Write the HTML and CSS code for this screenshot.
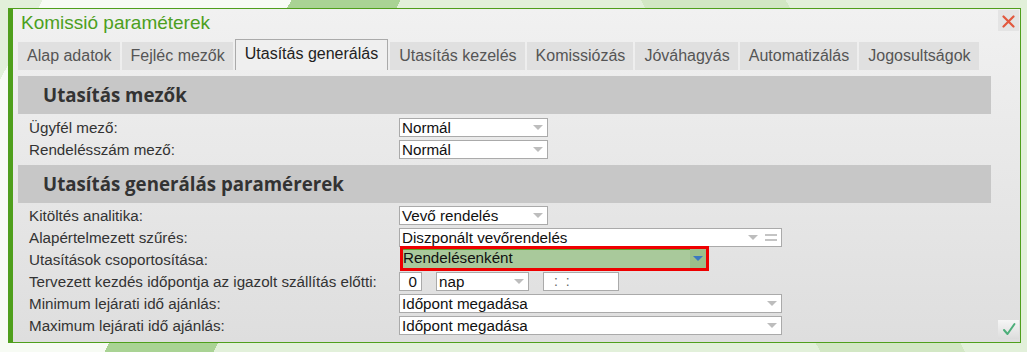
FILE: index.html
```html
<!DOCTYPE html>
<html lang="hu">
<head>
  <meta charset="UTF-8">
  <title>Komissió paraméterek</title>
  <link rel="stylesheet" href="styles.css">
</head>
<body>

  <div class="dialog">
    <div class="title">Komissió paraméterek</div>
    <button class="close-btn">
      <svg width="13" height="13" viewBox="0 0 13 13"><path d="M1.5 1.5 L11.5 11.5 M11.5 1.5 L1.5 11.5" stroke="#e2583e" stroke-width="2.2" stroke-linecap="round"/></svg>
    </button>

    <div class="tabs">
      <div class="tab">Alap adatok</div>
      <div class="tab">Fejléc mezők</div>
      <div class="tab active">Utasítás generálás</div>
      <div class="tab">Utasítás kezelés</div>
      <div class="tab">Komissiózás</div>
      <div class="tab">Jóváhagyás</div>
      <div class="tab">Automatizálás</div>
      <div class="tab">Jogosultságok</div>
    </div>

    <div class="panel">
      <div class="section-head">Utasítás mezők</div>
      <div class="rows">
        <div class="row">
          <div class="label">Ügyfél mező:</div>
          <div class="select short">Normál<span class="arrow"></span></div>
        </div>
        <div class="row">
          <div class="label">Rendelésszám mező:</div>
          <div class="select short">Normál<span class="arrow"></span></div>
        </div>
      </div>

      <div class="section-head">Utasítás generálás paramérerek</div>
      <div class="rows second">
        <div class="row">
          <div class="label">Kitöltés analitika:</div>
          <div class="select short">Vevő rendelés<span class="arrow"></span></div>
        </div>
        <div class="row">
          <div class="label">Alapértelmezett szűrés:</div>
          <div class="select wide with-eq">Diszponált vevőrendelés<span class="arrow"></span><span class="eq"></span></div>
        </div>
        <div class="row">
          <div class="label">Utasítások csoportosítása:</div>
          <div class="select highlight">Rendelésenként<span class="arrow"></span></div>
        </div>
        <div class="row">
          <div class="label">Tervezett kezdés időpontja az igazolt szállítás előtti:</div>
          <div class="num">0</div>
          <div class="select unit">nap<span class="arrow"></span></div>
          <div class="time">: &nbsp;:</div>
        </div>
        <div class="row">
          <div class="label">Minimum lejárati idő ajánlás:</div>
          <div class="select wide">Időpont megadása<span class="arrow"></span></div>
        </div>
        <div class="row">
          <div class="label">Maximum lejárati idő ajánlás:</div>
          <div class="select wide">Időpont megadása<span class="arrow"></span></div>
        </div>
      </div>
    </div>

    <button class="ok-btn">
      <svg width="14" height="14" viewBox="0 0 14 14"><path d="M2 8 L5.5 12 L12.5 2" fill="none" stroke="#4dae7a" stroke-width="2" stroke-linecap="round" stroke-linejoin="round"/></svg>
    </button>
  </div>

</body>
</html>
```

FILE: styles.css
```css
* {
  box-sizing: border-box;
}

body {
  margin: 0;
  padding: 8px 7px 0 8px;
  height: 352px;
  overflow: hidden;
  font-family: "Liberation Sans", Arial, sans-serif;
  background:
    linear-gradient(63deg, transparent 0 68%, #d2e7c4 68% 80%, transparent 80%),
    linear-gradient(118deg, transparent 0 3.5%, #f7fbf4 3.5% 24%, #a9d394 24% 33%, transparent 33%),
    #e2f0da;
}

.dialog {
  position: relative;
  width: 1013px;
  height: 335px;
  border: 1px solid #4f9f1c;
  border-left: 5px solid #4f9f1c;
  padding-left: 5px;
  background: linear-gradient(#f1f1f1, #dedede);
}

.title {
  height: 33px;
  padding: 3px 0 0 3px;
  font-size: 19px;
  color: #4c9f21;
}

.close-btn {
  position: absolute;
  top: 1px;
  right: 1px;
  width: 21px;
  height: 21px;
  border: none;
  padding: 4px 0 0 0;
  background: #e4e4e4;
}

.tabs {
  display: flex;
  align-items: flex-end;
  gap: 2px;
  height: 28px;
}

.tab {
  height: 28px;
  padding: 0 8px 0 9px;
  background: #e0e0e0;
  color: #555;
  font-size: 16px;
  line-height: 27px;
}

.tab.active {
  height: 31px;
  padding: 0 9px;
  line-height: 28px;
  border: 1px solid #aaa;
  border-bottom: none;
  background: #efefef;
  color: #222;
}

.panel {
  width: 973px;
  margin-top: 6px;
}

.section-head {
  height: 38px;
  padding-left: 25px;
  background: #c7c7c7;
  font-family: "Open Sans", "DejaVu Sans", sans-serif;
  font-weight: bold;
  font-size: 18.7px;
  line-height: 38px;
  color: #333;
}

.rows {
  padding: 3px 0 4px 11px;
}

.rows.second {
  padding-top: 2px;
}

.row {
  display: flex;
  align-items: flex-start;
  height: 22px;
}

.label {
  width: 370px;
  font-size: 15.2px;
  line-height: 21px;
  color: #333;
  white-space: nowrap;
}

.select {
  position: relative;
  height: 19px;
  margin-top: 1px;
  padding-left: 2px;
  border: 1px solid #aaa;
  background: #fff;
  font-size: 15.2px;
  line-height: 17px;
  color: #111;
}

.select.short {
  width: 149px;
}

.select.wide {
  width: 383px;
}

.select.unit {
  width: 93px;
  margin-left: 14px;
}

.select.highlight {
  width: 309px;
  height: 25px;
  margin: -3px 0 0 1px;
  border: 3px solid #ee0000;
  padding-left: 0;
  background: #a9c99b;
  box-shadow: inset 0 1px 0 #59a62c;
  line-height: 18px;
}

.arrow {
  position: absolute;
  right: 4px;
  top: 6px;
  width: 0;
  height: 0;
  border-left: 5px solid transparent;
  border-right: 5px solid transparent;
  border-top: 5px solid #bdbdbd;
}

.select.with-eq .arrow {
  right: 23px;
}

.eq {
  position: absolute;
  right: 4px;
  top: 5px;
  width: 12px;
  height: 7px;
  border-top: 2px solid #c4c4c4;
  border-bottom: 2px solid #c4c4c4;
}

.select.highlight .arrow {
  right: 0;
  top: 0;
  width: 16px;
  height: 19px;
  border: none;
  background: #9bbf8b;
}

.select.highlight .arrow::after {
  content: "";
  position: absolute;
  left: 3px;
  top: 7px;
  border-left: 5px solid transparent;
  border-right: 5px solid transparent;
  border-top: 5px solid #3b78c0;
}

.num {
  width: 23px;
  height: 19px;
  margin-top: 1px;
  border: 1px solid #aaa;
  background: #fff;
  font-size: 15.2px;
  line-height: 17px;
  text-align: right;
  padding-right: 4px;
  color: #111;
}

.time {
  width: 76px;
  height: 19px;
  margin: 1px 0 0 14px;
  border: 1px solid #aaa;
  background: #fff;
  font-size: 14px;
  line-height: 16px;
  padding-left: 10px;
  color: #666;
}

.ok-btn {
  position: absolute;
  right: 1px;
  bottom: 3px;
  width: 21px;
  height: 19px;
  padding: 2px 0 0 0;
  border: none;
  background: linear-gradient(#f6f6f6, #dcdcdc);
}
```
